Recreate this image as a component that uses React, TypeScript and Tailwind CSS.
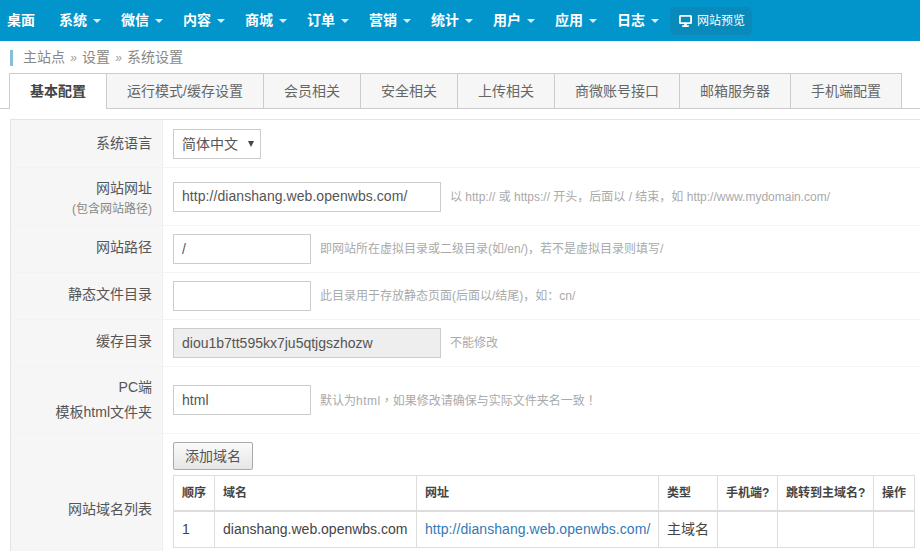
const F = "font-['Liberation_Sans','Noto_Sans_CJK_SC',sans-serif]";

const navItems = ["系统", "微信", "内容", "商城", "订单", "营销", "统计", "用户", "应用", "日志"];
const tabs = ["运行模式/缓存设置", "会员相关", "安全相关", "上传相关", "商微账号接口", "邮箱服务器", "手机端配置"];

function Row({ label, sub, h, lc, children }: { label: React.ReactNode; sub?: string; h: string; lc?: string; children: React.ReactNode }) {
  return (
    <div className={`flex border-b border-[#f3f3f3] ${h}`}>
      <div className={`w-[152px] shrink-0 bg-[#f6f6f6] border-r border-[#eeeeee] pr-[10px] flex flex-col justify-center items-end text-[14px] text-[#555] leading-[20px] ${lc ?? ""}`}>
        {label}
        {sub && <span className="text-[12px] text-[#888] leading-[18px] mt-[2px]">{sub}</span>}
      </div>
      <div className="flex-1 pl-[10px] flex items-center min-w-0">{children}</div>
    </div>
  );
}

function Field({ value, wide, disabled }: { value: string; wide?: boolean; disabled?: boolean }) {
  return (
    <div className={`h-[30px] shrink-0 border border-[#cccccc] px-[8px] flex items-center text-[14px] text-[#555] ${wide ? "w-[268px]" : "w-[138px]"} ${disabled ? "bg-[#eeeeee] border-[#bbbbbb]" : "bg-white tracking-[0.06px]"}`}>
      {value}
    </div>
  );
}

function Hint({ children }: { children: React.ReactNode }) {
  return <span className="ml-[9px] text-[12px] text-[#aaaaaa] whitespace-nowrap">{children}</span>;
}

function Punct({ children }: { children: React.ReactNode }) {
  return <span className="font-['Noto_Sans_CJK_TC',sans-serif]">{children}</span>;
}

function Sep() {
  return <span className="inline-block w-[17px] text-center text-[12px] italic text-[#999]">»</span>;
}

export default function App() {
  return (
    <div className={`${F} w-[920px] h-[551px] overflow-hidden bg-white`}>
      <header className="h-[41px] bg-[#0195cb] flex items-center pl-[7px] text-white text-[14px] font-bold">
        <span className="w-[52px]">桌面</span>
        {navItems.map((n) => (
          <span key={n} className="w-[62px] flex items-center">
            {n}
            <span className="ml-[6px] w-0 h-0 border-x-[4px] border-x-transparent border-t-[4px] border-t-white/85" />
          </span>
        ))}
        <span className="h-[28px] w-[82px] -ml-[9px] pl-[9px] rounded-[5px] bg-[#0a8abb] flex items-center gap-[5px] text-[12px] font-normal">
          <svg width="13" height="12" viewBox="0 0 13 12" fill="none">
            <rect x="0.9" y="0.9" width="11.2" height="7.2" rx="0.6" stroke="white" strokeWidth="1.8" />
            <path d="M5.2 9h2.6v1.2h2V12H3.2v-1.8h2z" fill="white" />
          </svg>
          网站预览
        </span>
      </header>

      <div className="h-[32px] pl-[10px] flex items-center pt-[1px]">
        <div className="w-[3px] h-[16px] bg-[#85c1d6]" />
        <span className="ml-[10px] text-[14px] text-[#888] whitespace-nowrap">主站点<Sep />设置<Sep />系统设置</span>
      </div>

      <div className="h-[36px] pl-[9px] flex border-b border-[#cccccc]">
        <div className="h-[36px] w-[98px] shrink-0 flex items-center justify-center border-t border-l border-r border-[#cccccc] bg-white text-[14px] font-bold text-[#444] whitespace-nowrap">基本配置</div>
        {tabs.map((t) => (
          <div key={t} className="h-[35px] px-[20px] flex items-center justify-center border-t border-r border-[#cccccc] bg-[#f6f6f6] text-[14px] text-[#666] whitespace-nowrap">{t}</div>
        ))}
      </div>

      <div className="ml-[10px] mt-[10px] border-t border-l border-[#e4e4e4]">
        <Row label="系统语言" h="h-[48px]" lc="pb-[2px]">
          <div className="h-[30px] w-[88px] border border-[#cccccc] pl-[8px] flex items-center justify-between pr-[6px] text-[14px] text-[#555] bg-white">
            <span className="pt-[2px]">简体中文</span>
            <span className="w-0 h-0 border-x-[3px] border-x-transparent border-t-[6px] border-t-[#444]" />
          </div>
        </Row>
        <Row label="网站网址" sub="(包含网站路径)" h="h-[58px]" lc="pt-[2px]">
          <Field value="http://dianshang.web.openwbs.com/" wide />
          <Hint>以 http:// 或 https:// 开头，后面以 / 结束，如 http://www.mydomain.com/</Hint>
        </Row>
        <Row label="网站路径" h="h-[47px]" lc="pb-[4px]">
          <Field value="/" />
          <Hint>即网站所在虚拟目录或二级目录(如/en/)，若不是虚拟目录则填写/</Hint>
        </Row>
        <Row label="静态文件目录" h="h-[47px]" lc="pb-[4px]">
          <Field value="" />
          <Hint>此目录用于存放静态页面(后面以/结尾)，如：cn/</Hint>
        </Row>
        <Row label="缓存目录" h="h-[47px]" lc="pb-[4px]">
          <Field value="diou1b7tt595kx7ju5qtjgszhozw" wide disabled />
          <Hint>不能修改</Hint>
        </Row>
        <Row label={<><span className="leading-[25px]">PC端</span><span className="leading-[25px]">模板html文件夹</span></>} h="h-[67px]">
          <Field value="html" />
          <Hint>默认为<span className="tracking-[0.5px]">html</span><Punct>，</Punct>如果修改请确保与实际文件夹名一致<Punct>！</Punct></Hint>
        </Row>
        <div className="flex">
          <div className="w-[152px] h-[150px] shrink-0 bg-[#f6f6f6] border-r border-[#eeeeee] pr-[10px] flex justify-end pt-[65px] text-[14px] text-[#555] leading-[20px]">网站域名列表</div>
          <div className="pl-[10px] pt-[8px]">
            <button className="block h-[28px] w-[80px] rounded-[2px] border border-[#aaaaaa] bg-gradient-to-b from-[#fafafa] to-[#e6e6e6] text-[14px] text-[#555]">添加域名</button>
            <table className="mt-[5px] table-fixed border-collapse border border-[#dddddd] w-[741px] text-[#444]">
              <colgroup>
                <col className="w-[41px]" />
                <col className="w-[202px]" />
                <col className="w-[242px]" />
                <col className="w-[59px]" />
                <col className="w-[60px]" />
                <col className="w-[96px]" />
                <col className="w-[41px]" />
              </colgroup>
              <thead>
                <tr className="h-[35px] text-[12px] font-bold text-left border-b-[2px] border-[#dddddd]">
                  {["顺序", "域名", "网址", "类型", "手机端?", "跳转到主域名?", "操作"].map((h) => (
                    <th key={h} className="border-x border-[#dddddd] pl-[8px] font-bold whitespace-nowrap overflow-hidden">{h}</th>
                  ))}
                </tr>
              </thead>
              <tbody>
                <tr className="h-[37px] text-[14px]">
                  <td className="border-x border-[#dddddd] pl-[8px]">1</td>
                  <td className="border-x border-[#dddddd] pl-[8px] whitespace-nowrap">dianshang.web.openwbs.com</td>
                  <td className="border-x border-[#dddddd] pl-[8px] text-[#337ab7] whitespace-nowrap tracking-[0.06px]">http://dianshang.web.openwbs.com/</td>
                  <td className="border-x border-[#dddddd] pl-[8px]">主域名</td>
                  <td className="border-x border-[#dddddd]" />
                  <td className="border-x border-[#dddddd]" />
                  <td className="border-x border-[#dddddd]" />
                </tr>
              </tbody>
            </table>
          </div>
        </div>
      </div>
    </div>
  );
}
